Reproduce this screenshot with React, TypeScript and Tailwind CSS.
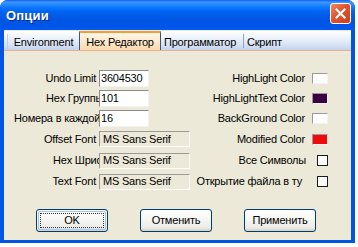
import React from "react";

function WhiteInput({ value }: { value: string }) {
  return (
    <div className="w-[50px] h-[17px] bg-white border-t border-l border-t-[#8c8c8c] border-l-[#8c8c8c] border-b border-r border-b-[#f4f3ee] border-r-[#f4f3ee] flex items-center pl-[1px] text-[11px] leading-none text-black">
      {value}
    </div>
  );
}

function GreyInput({ value }: { value: string }) {
  return (
    <div className="w-[91px] h-[16px] bg-[#ece9d8] border-t border-l border-t-[#9a9a9a] border-l-[#9a9a9a] border-b border-r border-b-white border-r-white flex items-center pl-[3px] text-[11px] leading-none text-black">
      {value}
    </div>
  );
}

function ColorBox({ color }: { color: string }) {
  return (
    <div
      className="ml-[7px] w-[16px] h-[11px] shrink-0 border-t border-l border-t-[#9a9a9a] border-l-[#9a9a9a] border-b border-r border-b-[#f4f3ee] border-r-[#f4f3ee]"
      style={{ backgroundColor: color }}
    />
  );
}

function Check({ cls }: { cls: string }) {
  return <div className={cls + " w-[11px] h-[11px] shrink-0 bg-white border border-[#1c1c1c]"} />;
}

export default function App() {
  return (
    <div className="w-[358px] h-[247px] bg-white font-['Liberation_Sans',Arial,sans-serif] text-[11px] tracking-[-0.2px] text-black">
      <div className="w-[355px] h-[243px] rounded-t-[8px] overflow-hidden bg-[#0055e5] flex flex-col">
        {/* Title bar */}
        <div className="h-[30px] shrink-0 bg-[linear-gradient(180deg,#0b5fea_0%,#3d95ff_7%,#2a8aff_14%,#137dff_22%,#0470fc_30%,#0263ee_40%,#0058e6_60%,#0055e3_80%,#0056ea_90%,#005cf4_100%)] flex items-center pl-[6px] pr-[4px]">
          <span className="text-white font-bold text-[13px] leading-none [text-shadow:1px_1px_0_#0a2a8a] tracking-[0.2px]">
            Опции
          </span>
          <div className="ml-auto w-[21px] h-[21px] rounded-[3px] border border-white bg-[linear-gradient(135deg,#f08a67_0%,#e2532c_45%,#c8401f_100%)] flex items-center justify-center mb-[3px]">
            <svg width="11" height="11" viewBox="0 0 11 11">
              <path d="M1.5 1.5 L9.5 9.5 M9.5 1.5 L1.5 9.5" stroke="white" strokeWidth="2.2" strokeLinecap="square" />
            </svg>
          </div>
        </div>
        {/* Client */}
        <div className="flex-1 mx-[4px] mb-[3px] bg-[#ece9d8] flex flex-col">
          {/* Tab strip */}
          <div className="mt-[1px] h-[20px] shrink-0 bg-[linear-gradient(180deg,#ffffff_0%,#eef3fb_35%,#d6e1f3_75%,#c3d3ee_100%)] border-b border-b-[#e8b08c] flex items-end">
            <div className="ml-[3px] w-[72px] h-[16px] flex items-center justify-center border-l border-l-[#c4cfe3] leading-none">
              Environment
            </div>
            <div className="w-[82px] h-[19px] flex items-center justify-center border-x border-x-[#3b5487] border-t-2 border-t-[#f0a030] bg-[linear-gradient(180deg,#fff6e8_0%,#fde9cc_50%,#fbd9aa_100%)] leading-none">
              <span className="mt-[1px]">Hex Редактор</span>
            </div>
            <div className="w-[82px] h-[16px] flex items-center pl-[3px] leading-none">
              Программатор
            </div>
            <div className="w-px h-[14px] mb-[2px] bg-[#8ea4c8]" />
            <div className="h-[16px] flex items-center pl-[3px] leading-none">Скрипт</div>
          </div>
          {/* Panel */}
          <div className="flex flex-col pt-[17px]">
            <div className="h-[20px] flex items-center pr-[23px]">
              <div className="w-[95px] shrink-0 overflow-hidden whitespace-nowrap text-right pr-[3px] leading-none">Undo Limit</div>
              <WhiteInput value="3604530" />
              <div className="flex-1 flex items-center justify-end whitespace-nowrap">
                <span className="leading-none">HighLight Color</span>
                <ColorBox color="#ffffff" />
              </div>
            </div>
            <div className="h-[20px] flex items-center pr-[23px]">
              <div className="w-[95px] shrink-0 overflow-hidden whitespace-nowrap pl-[42px] leading-none">Hex Группы</div>
              <WhiteInput value="101" />
              <div className="flex-1 flex items-center justify-end whitespace-nowrap">
                <span className="leading-none">HighLightText Color</span>
                <ColorBox color="#3a0042" />
              </div>
            </div>
            <div className="h-[20px] flex items-center pr-[23px]">
              <div className="w-[95px] shrink-0 overflow-hidden whitespace-nowrap pl-[10px] leading-none">Номера в каждой строке</div>
              <WhiteInput value="16" />
              <div className="flex-1 flex items-center justify-end whitespace-nowrap">
                <span className="leading-none">BackGround Color</span>
                <ColorBox color="#ffffff" />
              </div>
            </div>
            <div className="h-[22px] flex items-center pr-[23px]">
              <div className="w-[95px] shrink-0 overflow-hidden whitespace-nowrap text-right pr-[3px] leading-none">Offset Font</div>
              <GreyInput value="MS Sans Serif" />
              <div className="flex-1 flex items-center justify-end whitespace-nowrap">
                <span className="leading-none">Modified Color</span>
                <ColorBox color="#f00a0a" />
              </div>
            </div>
            <div className="h-[21px] flex items-center pr-[23px]">
              <div className="w-[95px] shrink-0 overflow-hidden whitespace-nowrap pl-[49px] leading-none">Hex Шрифт</div>
              <GreyInput value="MS Sans Serif" />
              <div className="flex-1 flex items-center justify-end whitespace-nowrap">
                <span className="leading-none">Все Символы</span>
                <Check cls="ml-[11px]" />
              </div>
            </div>
            <div className="h-[21px] flex items-center pr-[23px]">
              <div className="w-[95px] shrink-0 overflow-hidden whitespace-nowrap text-right pr-[3px] leading-none">Text Font</div>
              <GreyInput value="MS Sans Serif" />
              <div className="flex-1 flex items-center justify-end whitespace-nowrap">
                <span className="leading-none">Открытие файла в ту</span>
                <Check cls="ml-[15px]" />
              </div>
            </div>
          </div>
          {/* Buttons */}
          <div className="mt-[17px] flex pl-[32px] gap-[32px]">
            <button className="w-[72px] h-[23px] rounded-[3px] border border-[#003c74] bg-[linear-gradient(180deg,#ffffff_0%,#f7f7f4_40%,#ecebe6_85%,#d6d0c5_100%)] p-[1px]">
              <div className="w-full h-full rounded-[2px] border border-[#a8c4f0] flex items-center justify-center">
                <div className="w-[64px] h-[15px] border border-dotted border-[#333] flex items-center justify-center leading-none">
                  OK
                </div>
              </div>
            </button>
            <button className="w-[72px] h-[23px] rounded-[3px] border border-[#003c74] bg-[linear-gradient(180deg,#ffffff_0%,#f7f7f4_40%,#ecebe6_85%,#d6d0c5_100%)] flex items-center justify-center leading-none">
              Отменить
            </button>
            <button className="w-[72px] h-[23px] rounded-[3px] border border-[#003c74] bg-[linear-gradient(180deg,#ffffff_0%,#f7f7f4_40%,#ecebe6_85%,#d6d0c5_100%)] flex items-center justify-center leading-none">
              Применить
            </button>
          </div>
        </div>
      </div>
    </div>
  );
}
